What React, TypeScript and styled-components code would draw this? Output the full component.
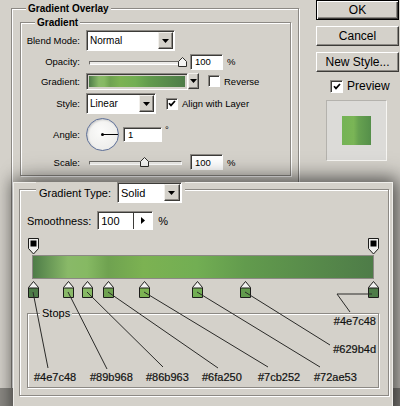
import React from "react";
import styled, { createGlobalStyle } from "styled-components";

const face = "#d4d1ca";

const GlobalStyle = createGlobalStyle`
  html, body {
    margin: 0;
    padding: 0;
    background: #8b8984;
  }
  body {
    font-family: "Liberation Sans", Arial, sans-serif;
    color: #000;
  }
`;

type Stop = { at: number; color: string };

const colorStops: Stop[] = [
    { at: 0, color: "#4e7c48" },
    { at: 10.3, color: "#89b968" },
    { at: 15.9, color: "#86b963" },
    { at: 22.1, color: "#6fa250" },
    { at: 32.6, color: "#7cb252" },
    { at: 48.2, color: "#72ae53" },
    { at: 62.4, color: "#629b4d" },
    { at: 100, color: "#4e7c48" }
];

const opacityStops = [0, 100];

const gradientCss = `linear-gradient(to right, ${colorStops.map(s => `${s.color} ${s.at}%`).join(", ")})`;

// the layer preview shows the overlay stretched over a small square
const previewCss = "linear-gradient(to right, #74b355 0%, #7ab556 40%, #66a150 58%, #558f4a 100%)";

// callout lines from each colour stop down to its hex label (editor window coordinates)
const callouts: string[] = [
    "20,110 35,186",
    "55,110 94,187",
    "74,110 150,185",
    "95,110 205,186",
    "131,110 255,185",
    "184,110 307,185",
    "232,110 317,163",
    "359,112 324,112 337,130"
];

const bottomLabels = ["#4e7c48", "#89b968", "#86b963", "#6fa250", "#7cb252", "#72ae53"];

const Screen = styled.div`
    position: relative;
    width: 400px;
    height: 406px;
    overflow: hidden;
    background: #8b8984;
`;

const StyleDialog = styled.div`
    display: flex;
    align-items: flex-start;
    height: 388px;
    overflow: hidden;
    background: ${face};
`;

const GroupBox = styled.div<{ $w: number; $h: number }>`
    position: relative;
    box-sizing: border-box;
    width: ${p => p.$w}px;
    height: ${p => p.$h}px;
    border: 1px solid #8c8984;
    box-shadow: inset 1px 1px 0 #fff, 1px 1px 0 #fff;
`;

const OuterGroup = styled(GroupBox)`
    margin: 8px 0 0 11px;
    flex: none;
`;

const InnerGroup = styled(GroupBox)`
    margin: 13px 0 0 8px;
    padding-top: 7px;
    display: flex;
    flex-direction: column;
    gap: 2px;
`;

const GroupTitle = styled.span<{ $left: number; $bold?: boolean; $size: number }>`
    position: absolute;
    top: -7px;
    left: ${p => p.$left}px;
    padding: 0 2px;
    background: ${face};
    font-size: ${p => p.$size}px;
    line-height: 13px;
    font-weight: ${p => (p.$bold ? 700 : 400)};
    white-space: nowrap;
`;

const Row = styled.div<{ $h: number }>`
    display: flex;
    align-items: center;
    height: ${p => p.$h}px;
    font-size: 9.5px;
`;

const FieldLabel = styled.span`
    width: 59px;
    margin-right: 6px;
    text-align: right;
    white-space: nowrap;
`;

const Sunken = styled.div`
    box-sizing: border-box;
    border: 1px solid;
    border-color: #8c8984 #fff #fff #8c8984;
    box-shadow: inset 1px 1px 0 #3c3b38;
`;

const SelectBox = styled(Sunken)<{ $w: number; $h: number; $size: number }>`
    display: flex;
    align-items: stretch;
    width: ${p => p.$w}px;
    height: ${p => p.$h}px;
    background: #fff;
    font-size: ${p => p.$size}px;
    flex: none;
`;

const SelectText = styled.span`
    flex: 1;
    display: flex;
    align-items: center;
    padding-left: 3px;
`;

const DropButton = styled.span<{ $w: number }>`
    box-sizing: border-box;
    display: flex;
    align-items: center;
    justify-content: center;
    width: ${p => p.$w}px;
    margin: 1px 1px 1px 0;
    background: ${face};
    border: 1px solid;
    border-color: #f2f0ec #3c3b38 #3c3b38 #f2f0ec;
    box-shadow: inset -1px -1px 0 #8c8984;
`;

const DownArrow = () => (
    <svg width="7" height="4" viewBox="0 0 7 4">
        <polygon points="0,0 7,0 3.5,4" fill="#000" />
    </svg>
);

const Select = ({ w, h, size = 10, value, arrowW = 15 }: { w: number; h: number; size?: number; value: string; arrowW?: number }) => (
    <SelectBox $w={w} $h={h} $size={size}>
        <SelectText>{value}</SelectText>
        <DropButton $w={arrowW}>
            <DownArrow />
        </DropButton>
    </SelectBox>
);

const NumberBox = styled(Sunken)<{ $w: number; $h: number; $ml: number }>`
    display: flex;
    align-items: center;
    width: ${p => p.$w}px;
    height: ${p => p.$h}px;
    margin-left: ${p => p.$ml}px;
    padding-left: 4px;
    background: #fff;
    font-size: 9.5px;
    flex: none;
`;

const Unit = styled.span<{ $ml: number; $up?: boolean }>`
    margin-left: ${p => p.$ml}px;
    align-self: ${p => (p.$up ? "flex-start" : "center")};
    margin-top: ${p => (p.$up ? "7px" : "0")};
`;

const SliderWrap = styled.div<{ $w: number }>`
    position: relative;
    width: ${p => p.$w}px;
    height: 12px;
    margin-left: 3px;
    flex: none;
`;

const SliderTrack = styled.div`
    position: absolute;
    left: 0;
    right: 0;
    top: 5px;
    height: 4px;
    box-sizing: border-box;
    border: 1px solid;
    border-color: #6e6c68 #fff #fff #6e6c68;
    background: #ecebe8;
`;

const SliderThumb = styled.svg`
    position: absolute;
    top: 1px;
`;

const Slider = ({ w, value }: { w: number; value: number }) => (
    <SliderWrap $w={w}>
        <SliderTrack />
        <SliderThumb width="9" height="10" viewBox="0 0 9 10" style={{ left: w * value - 4.5 }}>
            <polygon points="4.5,0.5 8.5,4.5 8.5,9.5 0.5,9.5 0.5,4.5" fill="#f4f4f2" stroke="#2e2d2a" />
        </SliderThumb>
    </SliderWrap>
);

const GradientSwatch = styled(Sunken)`
    width: 102px;
    height: 17px;
    padding: 2px;
    background: ${face};
    flex: none;
    &::after {
        content: "";
        display: block;
        height: 100%;
        background: ${gradientCss};
    }
`;

const SwatchArrow = styled(DropButton)`
    height: 16px;
    margin: 0;
    flex: none;
`;

const CheckBox = styled(Sunken)<{ $size: number; $ml: number }>`
    display: flex;
    align-items: center;
    justify-content: center;
    width: ${p => p.$size}px;
    height: ${p => p.$size}px;
    margin-left: ${p => p.$ml}px;
    background: #fff;
    flex: none;
`;

const Check = ({ checked, size = 12, ml = 0 }: { checked: boolean; size?: number; ml?: number }) => (
    <CheckBox $size={size} $ml={ml}>
        {checked && (
            <svg width="8" height="7" viewBox="0 0 8 7">
                <polyline points="1,3.2 3,5.4 7,1" fill="none" stroke="#000" strokeWidth="1.7" />
            </svg>
        )}
    </CheckBox>
);

const CheckText = styled.span<{ $size: number }>`
    margin-left: 4px;
    font-size: ${p => p.$size}px;
`;

const Dial = styled.div`
    position: relative;
    box-sizing: border-box;
    width: 33px;
    height: 33px;
    border-radius: 50%;
    border: 1px solid #5d6f98;
    background: radial-gradient(circle at 45% 40%, #fbfbfa 0%, #eeeeec 70%, #d8d8d6 100%);
    box-shadow: inset 1px 1px 2px rgba(0, 0, 0, 0.18);
    flex: none;
`;

const DialHand = styled.span`
    position: absolute;
    left: 15px;
    top: 15px;
    width: 16px;
    height: 1px;
    background: #000;
    &::before {
        content: "";
        position: absolute;
        left: -1px;
        top: -1px;
        width: 3px;
        height: 3px;
        border-radius: 50%;
        background: #000;
    }
`;

const ButtonColumn = styled.div`
    display: flex;
    flex-direction: column;
    width: 83px;
    margin-left: 17px;
    flex: none;
`;

const DialogButton = styled.button<{ $default?: boolean }>`
    box-sizing: border-box;
    height: 20px;
    margin: 0 0 6px;
    padding: 0;
    font-family: inherit;
    font-size: 12px;
    color: #000;
    background: ${face};
    border: 1px solid;
    border-color: ${p => (p.$default ? "#000" : "#fff #3c3b38 #3c3b38 #fff")};
    box-shadow: ${p =>
        p.$default
            ? "inset 1px 1px 0 #fff, inset -1px -1px 0 #3c3b38, inset -2px -2px 0 #8c8984"
            : "inset -1px -1px 0 #8c8984"};
`;

const PreviewRow = styled.label`
    display: flex;
    align-items: center;
    height: 14px;
    margin-top: 1px;
    padding-left: 14px;
    font-size: 12px;
`;

const PreviewBox = styled.div`
    box-sizing: border-box;
    display: flex;
    align-items: center;
    justify-content: center;
    width: 61px;
    height: 61px;
    margin: 7px 0 0 10px;
    background: #dcdbd8;
    border: 1px solid;
    border-color: #b4b2ad #f7f6f3 #f7f6f3 #b4b2ad;
`;

const PreviewFill = styled.div`
    width: 29px;
    height: 29px;
    background: ${previewCss};
`;

/* floating gradient editor window */

const EditorWindow = styled.div`
    position: absolute;
    left: 13px;
    top: 182px;
    box-sizing: border-box;
    width: 380px;
    height: 240px;
    background: ${face};
    border: 1px solid #efeeea;
    box-shadow: 0 0 14px 3px rgba(0, 0, 0, 0.38), 8px -4px 22px rgba(0, 0, 0, 0.35);
`;

const EditorFrame = styled(GroupBox)`
    margin: 6px 0 0 5px;
    padding: 21px 0 0 7px;
`;

const Legend = styled.div`
    position: absolute;
    top: -8px;
    left: 16px;
    display: flex;
    align-items: center;
    gap: 6px;
    padding: 0 3px;
    background: ${face};
    font-size: 11px;
`;

const SmoothRow = styled.div`
    display: flex;
    align-items: center;
    height: 19px;
    font-size: 11px;
`;

const SmoothField = styled(Sunken)`
    display: flex;
    align-items: stretch;
    width: 56px;
    height: 19px;
    margin-left: 6px;
    background: #fff;
`;

const SmoothValue = styled.span`
    flex: 1;
    display: flex;
    align-items: center;
    padding-left: 3px;
`;

const StepButton = styled.span`
    display: flex;
    align-items: center;
    justify-content: center;
    width: 18px;
    border-left: 1px solid #3c3b38;
`;

const StopArea = styled.div`
    width: 342px;
    margin: 8px 0 0 5px;
`;

const StopRail = styled.div<{ $mt: number }>`
    position: relative;
    height: 17px;
    margin-top: ${p => p.$mt}px;
`;

const StopMarker = styled.svg`
    position: absolute;
    top: 0;
`;

const GradientBar = styled.div`
    box-sizing: border-box;
    height: 24px;
    border: 1px solid #8c8984;
    background: ${gradientCss};
`;

const StopsBox = styled(GroupBox)`
    margin: 15px 0 0 0;
    padding: 1px 2px 0 6px;
    display: flex;
    flex-direction: column;
`;

const HexLabel = styled.span<{ $mt?: number }>`
    font-size: 11px;
    line-height: 13px;
    margin-top: ${p => p.$mt || 0}px;
    color: #111;
    -webkit-text-stroke: 0.2px #111;
`;

const RightLabels = styled.div`
    display: flex;
    flex-direction: column;
    align-items: flex-end;
`;

const BottomLabels = styled.div`
    display: grid;
    grid-template-columns: repeat(6, 56px);
    margin-top: 15px;
`;

const Callouts = styled.svg`
    position: absolute;
    left: -1px;
    top: -1px;
    pointer-events: none;
`;

const stopLeft = (at: number) => 1 + (at / 100) * 340 - 5;

const ColorStop = ({ stop }: { stop: Stop }) => (
    <StopMarker width="11" height="17" viewBox="0 0 11 17" style={{ left: stopLeft(stop.at) }}>
        <polygon points="5.5,0.5 10.5,6.5 10.5,16.5 0.5,16.5 0.5,6.5" fill="#f2f2f0" stroke="#1c1c1a" />
        <rect x="1" y="7" width="9" height="9" fill={stop.color} />
        <line x1="0.5" y1="7" x2="10.5" y2="7" stroke="#1c1c1a" />
    </StopMarker>
);

const OpacityStop = ({ at }: { at: number }) => (
    <StopMarker width="11" height="17" viewBox="0 0 11 17" style={{ left: stopLeft(at) }}>
        <polygon points="0.5,0.5 10.5,0.5 10.5,10.5 5.5,16 0.5,10.5" fill="#efefed" stroke="#1c1c1a" />
        <rect x="2.5" y="2.5" width="6" height="6" fill="#000" />
    </StopMarker>
);

export default function App() {
    return (
        <Screen>
            <GlobalStyle />
            <StyleDialog>
                <OuterGroup $w={288} $h={400}>
                    <GroupTitle $left={14} $size={10} $bold>
                        Gradient Overlay
                    </GroupTitle>
                    <InnerGroup $w={271} $h={154}>
                        <GroupTitle $left={14} $size={10} $bold>
                            Gradient
                        </GroupTitle>
                        <Row $h={21}>
                            <FieldLabel>Blend Mode:</FieldLabel>
                            <Select w={89} h={21} value="Normal" />
                        </Row>
                        <Row $h={17}>
                            <FieldLabel>Opacity:</FieldLabel>
                            <Slider w={93} value={1} />
                            <NumberBox $w={33} $h={16} $ml={8}>100</NumberBox>
                            <Unit $ml={4}>%</Unit>
                        </Row>
                        <Row $h={18}>
                            <FieldLabel>Gradient:</FieldLabel>
                            <GradientSwatch />
                            <SwatchArrow $w={11}>
                                <DownArrow />
                            </SwatchArrow>
                            <Check checked={false} ml={9} />
                            <CheckText $size={9.5}>Reverse</CheckText>
                        </Row>
                        <Row $h={23}>
                            <FieldLabel>Style:</FieldLabel>
                            <Select w={70} h={21} value="Linear" />
                            <Check checked ml={10} />
                            <CheckText $size={9.5}>Align with Layer</CheckText>
                        </Row>
                        <Row $h={34}>
                            <FieldLabel>Angle:</FieldLabel>
                            <Dial>
                                <DialHand />
                            </Dial>
                            <NumberBox $w={39} $h={15} $ml={4}>1</NumberBox>
                            <Unit $ml={3} $up>
                                °
                            </Unit>
                        </Row>
                        <Row $h={18}>
                            <FieldLabel>Scale:</FieldLabel>
                            <Slider w={93} value={0.6} />
                            <NumberBox $w={33} $h={16} $ml={8}>100</NumberBox>
                            <Unit $ml={4}>%</Unit>
                        </Row>
                    </InnerGroup>
                </OuterGroup>
                <ButtonColumn>
                    <DialogButton $default>OK</DialogButton>
                    <DialogButton>Cancel</DialogButton>
                    <DialogButton>New Style...</DialogButton>
                    <PreviewRow>
                        <Check checked size={13} />
                        <CheckText $size={12}>Preview</CheckText>
                    </PreviewRow>
                    <PreviewBox>
                        <PreviewFill />
                    </PreviewBox>
                </ButtonColumn>
            </StyleDialog>

            <EditorWindow>
                <EditorFrame $w={370} $h={207}>
                    <Legend>
                        <span>Gradient Type:</span>
                        <Select w={65} h={21} size={11} value="Solid" arrowW={16} />
                    </Legend>
                    <SmoothRow>
                        <span>Smoothness:</span>
                        <SmoothField>
                            <SmoothValue>100</SmoothValue>
                            <StepButton>
                                <svg width="4" height="7" viewBox="0 0 4 7">
                                    <polygon points="0,0 4,3.5 0,7" fill="#000" />
                                </svg>
                            </StepButton>
                        </SmoothField>
                        <Unit $ml={5}>%</Unit>
                    </SmoothRow>
                    <StopArea>
                        <StopRail $mt={0}>
                            {opacityStops.map(at => (
                                <OpacityStop key={at} at={at} />
                            ))}
                        </StopRail>
                        <GradientBar />
                        <StopRail $mt={2}>
                            {colorStops.map((s, i) => (
                                <ColorStop key={i} stop={s} />
                            ))}
                        </StopRail>
                    </StopArea>
                    <StopsBox $w={352} $h={75}>
                        <GroupTitle $left={12} $size={11}>
                            Stops
                        </GroupTitle>
                        <RightLabels>
                            <HexLabel>#4e7c48</HexLabel>
                            <HexLabel $mt={15}>#629b4d</HexLabel>
                        </RightLabels>
                        <BottomLabels>
                            {bottomLabels.map((l, i) => (
                                <HexLabel key={i}>{l}</HexLabel>
                            ))}
                        </BottomLabels>
                    </StopsBox>
                </EditorFrame>
                <Callouts width="380" height="240" viewBox="0 0 380 240">
                    {callouts.map((pts, i) => (
                        <polyline key={i} points={pts} fill="none" stroke="#2a2a28" strokeWidth="1" />
                    ))}
                </Callouts>
            </EditorWindow>
        </Screen>
    );
}
